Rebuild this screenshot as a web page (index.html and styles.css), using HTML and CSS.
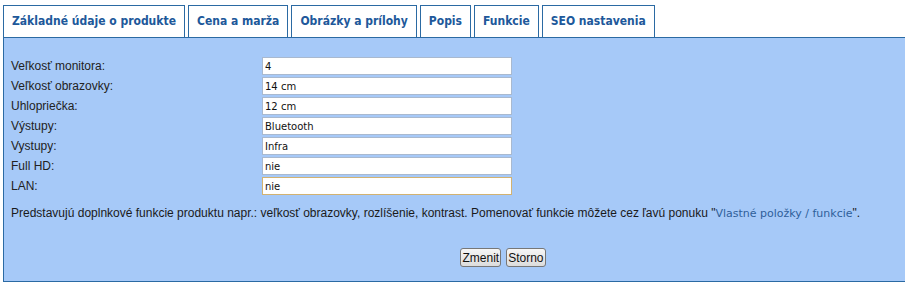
FILE: index.html
```html
<!DOCTYPE html>
<html lang="sk">
<head>
  <meta charset="UTF-8">
  <title>Funkcie produktu</title>
  <link rel="stylesheet" href="styles.css">
</head>
<body>
  <div class="wrap">
    <ul class="tabs">
      <li class="tab">Základné údaje o produkte</li>
      <li class="tab">Cena a marža</li>
      <li class="tab">Obrázky a prílohy</li>
      <li class="tab">Popis</li>
      <li class="tab">Funkcie</li>
      <li class="tab">SEO nastavenia</li>
    </ul>

    <div class="panel">
      <form class="fields">
        <label for="f1">Veľkosť monitora:</label>
        <input type="text" id="f1" value="4">

        <label for="f2">Veľkosť obrazovky:</label>
        <input type="text" id="f2" value="14 cm">

        <label for="f3">Uhlopriečka:</label>
        <input type="text" id="f3" value="12 cm">

        <label for="f4">Výstupy:</label>
        <input type="text" id="f4" value="Bluetooth">

        <label for="f5">Vystupy:</label>
        <input type="text" id="f5" value="Infra">

        <label for="f6">Full HD:</label>
        <input type="text" id="f6" value="nie">

        <label for="f7">LAN:</label>
        <input type="text" id="f7" value="nie" class="active">
      </form>

      <p class="note">Predstavujú doplnkové funkcie produktu napr.: veľkosť obrazovky, rozlíšenie, kontrast. Pomenovať funkcie môžete cez ľavú ponuku "<a href="#">Vlastné položky / funkcie</a>".</p>

      <div class="buttons">
        <button type="button">Zmenit</button>
        <button type="button">Storno</button>
      </div>
    </div>
  </div>
</body>
</html>
```

FILE: styles.css
```css
body {
  margin: 0;
  background-color: #ffffff;
  font-family: 'Liberation Sans', Arial, sans-serif;
  font-size: 12px;
  color: #1a1a1a;
}

.wrap {
  padding: 5px 0 0 3px;
}

.tabs {
  display: flex;
  gap: 3px;
  list-style: none;
  margin: 0;
  padding: 0;
}

.tab {
  height: 31px;
  line-height: 30px;
  padding: 0 8px;
  border: 1px solid #2b6aa3;
  border-bottom: none;
  background-color: #ffffff;
  color: #20589a;
  font-family: 'DejaVu Sans Condensed', 'DejaVu Sans', Tahoma, sans-serif;
  font-weight: bold;
  font-size: 12px;
}

.panel {
  height: 243px;
  margin-right: -2px;
  padding: 0 7px;
  border: 1px solid #2b6aa3;
  background-color: #a6c9f8;
}

.fields {
  display: grid;
  grid-template-columns: 251px 250px;
  row-gap: 2px;
  margin-top: 19px;
}

.fields label {
  line-height: 18px;
  color: #222222;
}

.fields input {
  height: 18px;
  box-sizing: border-box;
  margin: 0;
  padding: 0 2px;
  border: 1px solid #a9b9cf;
  background-color: #ffffff;
  font-family: 'DejaVu Sans', Verdana, sans-serif;
  font-size: 10px;
  color: #111111;
  outline: none;
}

.fields input.active {
  border-color: #d2b271;
}

.note {
  margin: 10px 0 0;
  line-height: 16px;
}

.note a {
  color: #2f5f9a;
  text-decoration: none;
  font-family: 'DejaVu Sans', Verdana, sans-serif;
  font-size: 11px;
}

.buttons {
  display: flex;
  justify-content: center;
  gap: 5px;
  margin-top: 26px;
  padding-left: 96px;
}

.buttons button {
  height: 19px;
  padding: 0 1px;
  border: 1px solid #777777;
  border-radius: 3px;
  background: linear-gradient(#f6f6f6, #dcdcdc);
  font-family: 'Liberation Sans', Arial, sans-serif;
  font-size: 12px;
  color: #111111;
}
```
